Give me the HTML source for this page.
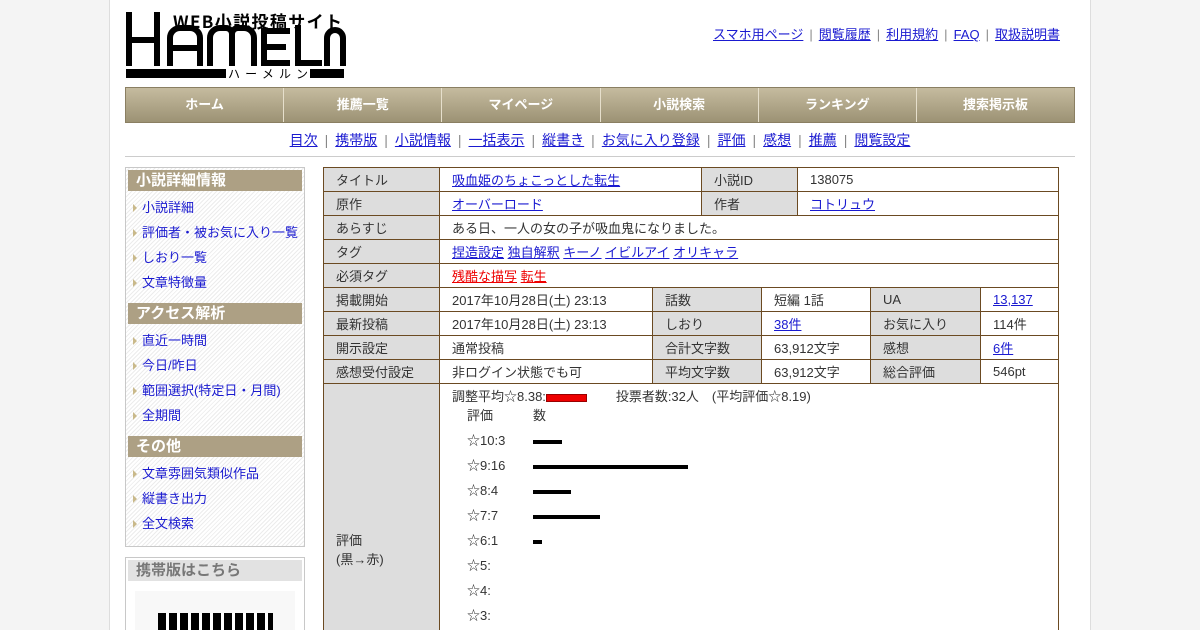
<!DOCTYPE html>
<html><head><meta charset="utf-8"><style>
*{box-sizing:border-box}
html,body{overflow:hidden;height:630px}
body{margin:0;background:#f4f4f4;font-family:"Liberation Sans","Noto Sans CJK JP",sans-serif;font-size:13px;color:#333}
#wrap{position:absolute;left:109px;top:0;width:982px;height:630px;background:#fff;border-left:1px solid #ddd;border-right:1px solid #ddd;overflow:hidden}
a{color:#1a1ad0;text-decoration:underline}
.top{position:absolute;left:597px;top:24px;font-size:13px;color:#888}
.top a{margin:0 6px}
.nav{position:absolute;left:15px;top:87px;width:950px;height:36px;display:flex;border:1px solid #8a7f62}
.nav div{flex:1;color:#fff;font-weight:bold;font-size:13px;text-align:center;line-height:34px;background:linear-gradient(#c5bb9f,#9c9274);border-right:1px solid #e6dfcc}
.nav div:last-child{border-right:none}
.sub{position:absolute;left:15px;top:130px;width:950px;text-align:center;font-size:14px;color:#888;height:27px;border-bottom:1px solid #ccc}
.sub a{margin:0 7px}
.side{position:absolute;left:15px;top:167px;width:180px;height:380px;border:1px solid #c8c8c8;background:repeating-linear-gradient(135deg,#fff 0 2px,#ececec 2px 3px);padding:2px}
.sh{background:#ada084;color:#fff;font-weight:bold;font-size:15px;height:21px;line-height:21px;padding-left:8px;margin:8px 0 4px}
.sh.f{margin-top:0}
.si{height:25px;line-height:25px;padding-left:14px;position:relative;font-size:13px}
.si a{text-decoration:none}
.si:before{content:"";position:absolute;left:5px;top:9px;border-left:4px solid #c9b98a;border-top:4px solid transparent;border-bottom:4px solid transparent}
.qr{position:absolute;left:15px;top:557px;width:180px;height:80px;border:1px solid #c8c8c8;padding:2px;background:#fff}
.qr .h{background:#e2e2e2;color:#777;font-weight:bold;font-size:15px;height:21px;line-height:21px;padding-left:8px}
table{position:absolute;left:213px;border-collapse:collapse;width:736px;font-size:13px;table-layout:fixed}
td{border:1px solid #6b4a22;height:24px;padding:0 12px;white-space:nowrap;overflow:hidden}
td.l{background:#ddd;color:#333}
.red a{color:#e00}
.bar{display:inline-block;height:4px;background:#000;vertical-align:middle}
.rt div{height:25px;line-height:25px}
</style></head><body><div id="wrap">
<svg style="position:absolute;left:-110px;top:0" width="460" height="85">
<g fill="none" stroke="#000" stroke-width="6">
<path d="M129 12V66M157 12V66M129 40H157"/>
<path d="M170 66V38a10 10 0 0 1 10-10h10a10 10 0 0 1 10 10v28M170 48H200"/>
<path d="M210 66V38a10 10 0 0 1 10-10h6a6 6 0 0 1 6 6v32M232 34a6 6 0 0 1 6-6h6a10 10 0 0 1 10 10v28"/>
<path d="M290 31H264V63H290M264 47H286"/>
<path d="M298 25V63H322"/>
<path d="M327 66V38a8 8 0 0 1 8-8h0a8 8 0 0 1 8 8v28"/>
</g>
<rect x="126" y="69" width="100" height="9"/><rect x="310" y="69" width="34" height="9"/>
<text x="173" y="28" font-size="17" font-family="Noto Sans CJK JP" font-weight="bold" textLength="169">WEB小説投稿サイト</text>
<text x="228" y="78" font-size="12" font-family="Noto Sans CJK JP" textLength="80">ハーメルン</text>
</svg>
<div class="top"><a>スマホ用ページ</a>|<a>閲覧履歴</a>|<a>利用規約</a>|<a>FAQ</a>|<a>取扱説明書</a></div>
<div class="nav"><div>ホーム</div><div>推薦一覧</div><div>マイページ</div><div>小説検索</div><div>ランキング</div><div>捜索掲示板</div></div>
<div class="sub"><a>目次</a>|<a>携帯版</a>|<a>小説情報</a>|<a>一括表示</a>|<a>縦書き</a>|<a>お気に入り登録</a>|<a>評価</a>|<a>感想</a>|<a>推薦</a>|<a>閲覧設定</a></div>
<div class="side">
<div class="sh f">小説詳細情報</div>
<div class="si"><a>小説詳細</a></div><div class="si"><a>評価者・被お気に入り一覧</a></div><div class="si"><a>しおり一覧</a></div><div class="si"><a>文章特徴量</a></div>
<div class="sh">アクセス解析</div>
<div class="si"><a>直近一時間</a></div><div class="si"><a>今日/昨日</a></div><div class="si"><a>範囲選択(特定日・月間)</a></div><div class="si"><a>全期間</a></div>
<div class="sh">その他</div>
<div class="si"><a>文章雰囲気類似作品</a></div><div class="si"><a>縦書き出力</a></div><div class="si"><a>全文検索</a></div>
</div>
<div class="qr"><div class="h">携帯版はこちら</div>
<div style="margin:10px 0 0 7px;width:160px;height:40px;background:#f8f8f8;position:relative">
<div style="position:absolute;left:23px;top:22px;width:115px;height:20px;background:repeating-linear-gradient(90deg,#000 0 8px,#fff 8px 11px)"></div></div></div>
<table style="top:167px">
<colgroup><col style="width:116px"><col style="width:262px"><col style="width:96px"><col></colgroup>
<tr><td class="l">タイトル</td><td><a>吸血姫のちょこっとした転生</a></td><td class="l">小説ID</td><td>138075</td></tr>
<tr><td class="l">原作</td><td><a>オーバーロード</a></td><td class="l">作者</td><td><a>コトリュウ</a></td></tr>
<tr><td class="l">あらすじ</td><td colspan="3">ある日、一人の女の子が吸血鬼になりました。</td></tr>
<tr><td class="l">タグ</td><td colspan="3"><a>捏造設定</a> <a>独自解釈</a> <a>キーノ</a> <a>イビルアイ</a> <a>オリキャラ</a></td></tr>
<tr><td class="l">必須タグ</td><td colspan="3" class="red"><a>残酷な描写</a> <a>転生</a></td></tr>
</table>
<table style="top:287px">
<colgroup><col style="width:116px"><col style="width:213px"><col style="width:109px"><col style="width:109px"><col style="width:110px"><col></colgroup>
<tr><td class="l">掲載開始</td><td>2017年10月28日(土) 23:13</td><td class="l">話数</td><td>短編 1話</td><td class="l">UA</td><td><a>13,137</a></td></tr>
<tr><td class="l">最新投稿</td><td>2017年10月28日(土) 23:13</td><td class="l">しおり</td><td><a>38件</a></td><td class="l">お気に入り</td><td>114件</td></tr>
<tr><td class="l">開示設定</td><td>通常投稿</td><td class="l">合計文字数</td><td>63,912文字</td><td class="l">感想</td><td><a>6件</a></td></tr>
<tr><td class="l">感想受付設定</td><td>非ログイン状態でも可</td><td class="l">平均文字数</td><td>63,912文字</td><td class="l">総合評価</td><td>546pt</td></tr>
<tr><td class="l" style="height:330px">評価<br>(黒→赤)</td><td colspan="5" style="vertical-align:top">
<div style="margin-top:2px">調整平均☆8.38:<span style="display:inline-block;width:41px;height:8px;background:#e00;border:1px solid #900;vertical-align:middle"></span>&nbsp;&nbsp;&nbsp;&nbsp;&nbsp;&nbsp;&nbsp;&nbsp;投票者数:32人　(平均評価☆8.19)</div>
<div class="rt" style="padding-left:15px;margin-top:-2px">
<div>評価<span style="margin-left:40px">数</span></div>
<div><span style="display:inline-block;width:66px">☆10:3</span><span class="bar" style="width:29px"></span></div>
<div><span style="display:inline-block;width:66px">☆9:16</span><span class="bar" style="width:155px"></span></div>
<div><span style="display:inline-block;width:66px">☆8:4</span><span class="bar" style="width:38px"></span></div>
<div><span style="display:inline-block;width:66px">☆7:7</span><span class="bar" style="width:67px"></span></div>
<div><span style="display:inline-block;width:66px">☆6:1</span><span class="bar" style="width:9px"></span></div>
<div>☆5:</div><div>☆4:</div><div>☆3:</div><div>☆2:</div><div>☆1:</div>
</div></td></tr>
</table>
</div></body></html>
